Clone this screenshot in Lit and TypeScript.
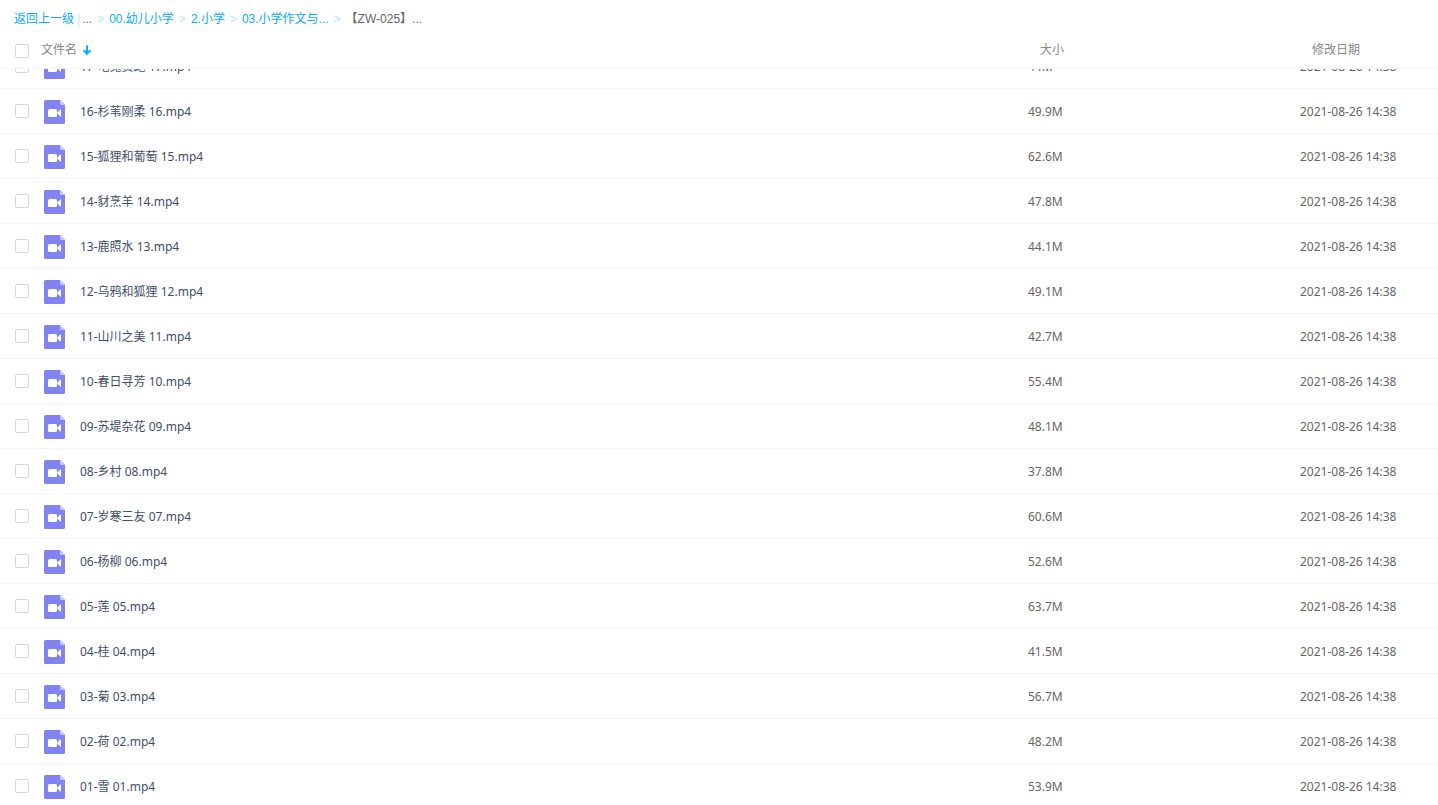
import { LitElement, html, css } from "lit";
import { customElement, query } from "lit/decorators.js";

interface VideoFile {
  name: string;
  size: string;
  date: string;
}

const DATE = "2021-08-26 14:38";

const FILES: VideoFile[] = [
  ["17-龟兔赛跑 17.mp4", "44M"],
  ["16-杉苇刚柔 16.mp4", "49.9M"],
  ["15-狐狸和葡萄 15.mp4", "62.6M"],
  ["14-豺烹羊 14.mp4", "47.8M"],
  ["13-鹿照水 13.mp4", "44.1M"],
  ["12-乌鸦和狐狸 12.mp4", "49.1M"],
  ["11-山川之美 11.mp4", "42.7M"],
  ["10-春日寻芳 10.mp4", "55.4M"],
  ["09-苏堤杂花 09.mp4", "48.1M"],
  ["08-乡村 08.mp4", "37.8M"],
  ["07-岁寒三友 07.mp4", "60.6M"],
  ["06-杨柳 06.mp4", "52.6M"],
  ["05-莲 05.mp4", "63.7M"],
  ["04-桂 04.mp4", "41.5M"],
  ["03-菊 03.mp4", "56.7M"],
  ["02-荷 02.mp4", "48.2M"],
  ["01-雪 01.mp4", "53.9M"],
].map(([name, size]) => ({ name, size, date: DATE }));

const INITIAL_SCROLL = 25;

@customElement("path-bar")
export class PathBar extends LitElement {
  static styles = css`
    :host {
      display: block;
      flex: none;
      height: 38px;
    }
    .bar {
      display: flex;
      align-items: center;
      height: 100%;
      padding: 0 14px;
      font: 12px/18px "Liberation Sans", "Noto Sans CJK SC", sans-serif;
      color: #666;
      white-space: pre;
    }
    .link {
      color: #09aaff;
      text-decoration: none;
    }
    .divider {
      padding: 0 2px 0 3px;
      color: #c4dbfe;
    }
    .arrow {
      padding: 0 5px;
      color: #c4dbfe;
    }
  `;

  render() {
    return html`<nav class="bar" aria-label="路径"><a class="link" href="#up">返回上一级</a><span class="divider">|</span><span>...</span><span class="arrow">&gt;</span><a class="link" href="#a">00.幼儿小学</a><span class="arrow">&gt;</span><a class="link" href="#b">2.小学</a><span class="arrow">&gt;</span><a class="link" href="#c">03.小学作文与...</a><span class="arrow">&gt;</span><span>【ZW-025】...</span></nav>`;
  }
}

@customElement("video-icon")
export class VideoIcon extends LitElement {
  static styles = css`
    :host {
      display: block;
    }
    .icon {
      display: block;
    }
  `;

  render() {
    return html`<svg class="icon" width="21" height="24" viewBox="0 0 21 24" aria-hidden="true">
      <path fill="#8183f1" d="M1.500 0H16l5 5v17.500a1.500 1.500 0 0 1-1.500 1.500h-18A1.500 1.500 0 0 1 0 22.500v-21A1.500 1.500 0 0 1 1.500 0z" />
      <path fill="#c6c7fa" d="M16 0l5 5h-3.800A1.200 1.200 0 0 1 16 3.800z" />
      <rect fill="#fff" x="4" y="9" width="9" height="8" rx="1.500" />
      <path fill="#fff" d="M13.400 12.400L16.200 9.600q.8-.5.8.5v5.800q0 1-.8.5L13.400 13.600z" />
    </svg>`;
  }
}

@customElement("app-root")
export class AppRoot extends LitElement {
  static styles = css`
    :host {
      display: flex;
      flex-direction: column;
      height: 100vh;
      background: #fff;
      font: 12px/18px "Noto Sans", "Noto Sans CJK SC", sans-serif;
    }
    .scroller {
      flex: 1;
      min-height: 0;
      overflow-y: auto;
      scrollbar-width: none;
    }
    .files {
      width: 100%;
      table-layout: fixed;
      border-collapse: separate;
      border-spacing: 0;
    }
    .col-size {
      width: 272px;
    }
    .col-date {
      width: 138px;
    }
    .head {
      position: sticky;
      top: 0;
      z-index: 1;
      box-sizing: border-box;
      height: 31px;
      padding: 0 0 6px;
      border-bottom: 1px solid #f2f6fd;
      background: #fff;
      color: #888;
      font-weight: 400;
      text-align: left;
    }
    .head-value {
      padding-left: 12px;
    }
    .cell {
      box-sizing: border-box;
      height: 45px;
      padding: 0;
      border-bottom: 1px solid #f2f6fd;
      color: #666;
    }
    .value {
      padding-top: 2px;
    }
    .line {
      display: flex;
      align-items: center;
      padding-left: 15px;
    }
    .check {
      appearance: none;
      box-sizing: border-box;
      width: 14px;
      height: 14px;
      margin: 0;
      border: 1px solid #d4d9e4;
      border-radius: 2px;
      background: #fff;
    }
    .check:checked {
      border-color: #09aaff;
      background: #09aaff;
    }
    .check-all {
      margin-top: 2px;
    }
    .sort {
      display: flex;
      align-items: center;
      gap: 5px;
      margin-left: 12px;
      padding: 0;
      border: 0;
      background: none;
      color: inherit;
      font: inherit;
    }
    .icon {
      margin: 2px 15px 0;
    }
    .name {
      padding-top: 2px;
      color: #424e67;
    }
  `;

  @query(".scroller") private scroller!: HTMLElement;

  firstUpdated() {
    this.scroller.scrollTop = INITIAL_SCROLL;
  }

  private row(file: VideoFile, index: number) {
    return html`<tr>
      <td class="cell">
        <div class="line">
          <input class="check" type="checkbox" id="file-${index}" />
          <video-icon class="icon"></video-icon>
          <label class="name" for="file-${index}">${file.name}</label>
        </div>
      </td>
      <td class="cell value">${file.size}</td>
      <td class="cell value">${file.date}</td>
    </tr>`;
  }

  render() {
    return html`<path-bar></path-bar>
      <div class="scroller">
        <table class="files">
          <colgroup>
            <col />
            <col class="col-size" />
            <col class="col-date" />
          </colgroup>
          <thead>
            <tr>
              <th class="head" scope="col">
                <div class="line">
                  <input class="check check-all" type="checkbox" aria-label="全选" />
                  <button class="sort" type="button">
                    文件名
                    <svg width="10" height="10" viewBox="0 0 10 10" aria-hidden="true">
                      <path d="M5 .5v8M1.500 5.200L5 8.700l3.500-3.500" fill="none" stroke="#09aaff" stroke-width="2" />
                    </svg>
                  </button>
                </div>
              </th>
              <th class="head head-value" scope="col">大小</th>
              <th class="head head-value" scope="col">修改日期</th>
            </tr>
          </thead>
          <tbody>
            ${FILES.map((file, index) => this.row(file, index))}
          </tbody>
        </table>
      </div>`;
  }
}
